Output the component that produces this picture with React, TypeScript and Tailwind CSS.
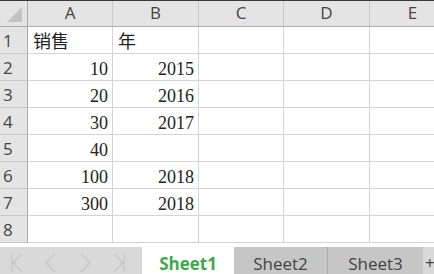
import React from "react";

const cols = ["A", "B", "C", "D", "E"];
const widths = ["w-[85px]", "w-[86px]", "w-[85px]", "w-[86px]", "w-[86px]"];
const rows: (string | null)[][] = [
  ["销售", "年"],
  ["10", "2015"],
  ["20", "2016"],
  ["30", "2017"],
  ["40", null],
  ["100", "2018"],
  ["300", "2018"],
  [null, null],
];

function Chev({ d }: { d: string }) {
  return (
    <svg width="16" height="22" viewBox="0 0 16 22" className="shrink-0">
      <path d={d} fill="none" stroke="#c4c4c4" strokeWidth="1.2" />
    </svg>
  );
}

export default function App() {
  return (
    <div className="w-[434px] h-[274px] overflow-hidden bg-white flex flex-col">
      <div className="h-[1px] bg-[#3a3a3a] shrink-0" />
      {/* header row */}
      <div className="flex h-[26px] shrink-0 bg-[#e4e4e4] border-b border-[#ababab] font-['Open_Sans','Liberation_Sans',sans-serif]">
        <div className="w-[28px] shrink-0 border-r border-[#ababab] relative">
          <svg width="16" height="16" viewBox="0 0 16 16" className="absolute left-[7px] top-[6px]">
            <polygon points="15,0 15,15 0,15" fill="#c3c3c3" />
          </svg>
        </div>
        {cols.map((c, i) => (
          <div
            key={c}
            className={`${widths[i]} shrink-0 border-r border-[#c8c8c8] flex items-center justify-center text-[17px] text-[#444] leading-none pb-[2px]`}
          >
            {c}
          </div>
        ))}
      </div>
      {rows.map((r, ri) => (
        <div key={ri} className="flex h-[27px] shrink-0">
          <div className="w-[28px] shrink-0 bg-[#e4e4e4] border-r border-[#ababab] border-b border-b-[#c8c8c8] flex items-center pl-[3px] text-[17px] text-[#444] leading-none font-['Open_Sans','Liberation_Sans',sans-serif]">
            {ri + 1}
          </div>
          {cols.map((c, ci) => {
            const v = ci < 2 ? r[ci] : null;
            const isText = ri === 0;
            return (
              <div
                key={c}
                className={`${widths[ci]} shrink-0 border-r border-b border-[#d4d4d4] flex items-center pt-[3px] text-[18px] text-[#222] leading-none font-['Liberation_Serif','Noto_Sans_CJK_SC',serif] ${isText ? "justify-start pl-[5px]" : "justify-end pr-[4px]"}`}
              >
                {v}
              </div>
            );
          })}
        </div>
      ))}
      <div className="h-[4px] shrink-0 bg-white" />
      {/* tab bar */}
      <div className="flex h-[27px] shrink-0 font-['Open_Sans','Liberation_Sans',sans-serif]">
        <div className="w-[142px] shrink-0 bg-[#d9d9d9] flex items-center pt-[4px]">
          <div className="w-[34px] flex justify-center">
            <Chev d="M3 2 L3 20 M13 2 L4 11 L13 20" />
          </div>
          <div className="w-[34px] flex justify-center">
            <Chev d="M12 2 L3 11 L12 20" />
          </div>
          <div className="w-[34px] flex justify-center">
            <Chev d="M4 2 L13 11 L4 20" />
          </div>
          <div className="w-[34px] flex justify-center">
            <Chev d="M3 2 L12 11 L3 20 M13 2 L13 20" />
          </div>
        </div>
        <div className="w-[92px] shrink-0 bg-white flex justify-center pt-[8px] text-[17px] font-bold text-[#3fa84c] leading-none">
          Sheet1
        </div>
        <div className="w-[94px] shrink-0 bg-[#c6c6c6] border-r border-[#aaaaaa] flex justify-center pt-[8px] text-[17px] text-[#444] leading-none">
          Sheet2
        </div>
        <div className="w-[95px] shrink-0 bg-[#c6c6c6] flex justify-center pt-[8px] text-[17px] text-[#444] leading-none">
          Sheet3
        </div>
        <div className="flex-1 bg-[#d9d9d9] flex pt-[7px] pl-[2px] text-[17px] text-[#444] leading-none">
          +
        </div>
      </div>
    </div>
  );
}
